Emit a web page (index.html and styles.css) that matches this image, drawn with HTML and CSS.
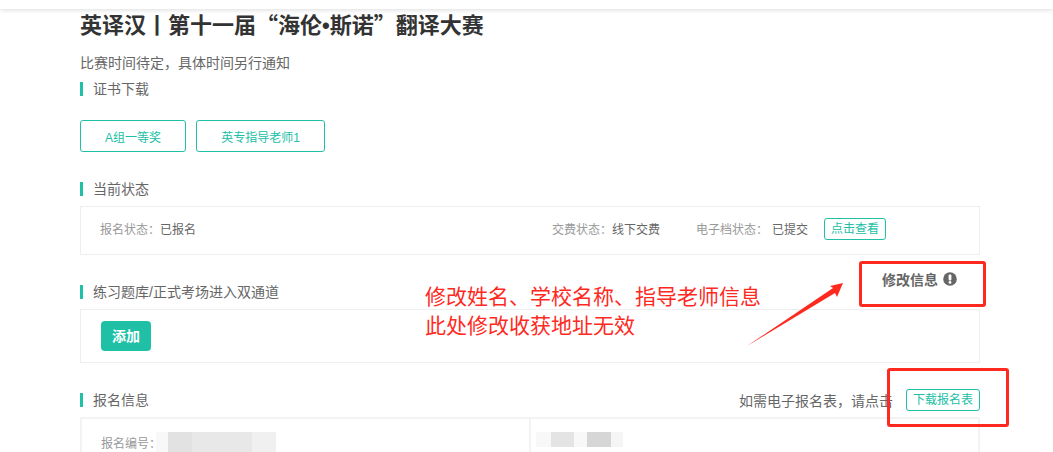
FILE: index.html
```html
<!DOCTYPE html>
<html lang="zh">
<head>
<meta charset="utf-8">
<title>第十一届“海伦•斯诺”翻译大赛</title>
<link rel="stylesheet" href="styles.css">
</head>
<body>
<header class="topbar"></header>
<main class="page">
  <h1 class="title">英译汉丨第十一届“海伦<span class="title-dot">•</span>斯诺”翻译大赛</h1>
  <p class="note">比赛时间待定，具体时间另行通知</p>

  <h2 class="heading heading-cert">证书下载</h2>
  <div class="certs">
    <a class="cert cert-a">A组一等奖</a>
    <a class="cert cert-b">英专指导老师1</a>
  </div>

  <h2 class="heading heading-status">当前状态</h2>
  <section class="box status">
    <div class="pair"><span class="label">报名状态：</span><span class="value">已报名</span></div>
    <div class="status-right">
      <div class="pair"><span class="label">交费状态：</span><span class="value">线下交费</span></div>
      <div class="pair pair-doc"><span class="label">电子档状态：</span><span class="value value-doc">已提交</span></div>
      <a class="tag tag-view">点击查看</a>
    </div>
  </section>

  <div class="heading-row heading-row-practice">
    <h2 class="heading">练习题库/正式考场进入双通道</h2>
    <div class="edit">修改信息
      <svg class="edit-icon" width="14" height="14" viewBox="0 0 14 14"><circle cx="7" cy="7" r="6.8" fill="#666"/><rect x="5.6" y="2.6" width="2.8" height="5.8" rx="1" fill="#fff"/><circle cx="7" cy="10.4" r="1.4" fill="#fff"/></svg>
    </div>
  </div>
  <section class="box practice"><a class="add">添加</a></section>

  <div class="heading-row heading-row-info">
    <h2 class="heading">报名信息</h2>
    <div class="download"><span>如需电子报名表，请点击</span><a class="tag tag-download">下载报名表</a></div>
  </div>
  <section class="info">
    <div class="info-cell info-left">
      <span class="label">报名编号：</span>
      <span class="blur blur-a"><i></i><i></i><i></i><i></i></span>
    </div>
    <div class="info-cell info-right">
      <span class="blur blur-b"><i></i><i></i><i></i><i></i><i></i></span>
    </div>
  </section>
</main>

<div class="mark mark-edit"></div>
<div class="mark mark-download"></div>
<p class="annotation">修改姓名、学校名称、指导老师信息<br>此处修改收获地址无效</p>
<svg class="arrow" width="100" height="70" viewBox="0 0 100 70"><path d="M0 66 L86 8 L83 6 L96 3 L90 17 L88 13 Z" fill="#ff2a1f"/></svg>
</body>
</html>
```
FILE: styles.css
```css
* { box-sizing: border-box; }
html, body { margin: 0; height: 452px; overflow: hidden; background: #fff; }
body { font-family: "Liberation Sans", "Noto Sans CJK SC", sans-serif; font-size: 12px; color: #666; position: relative; }

.topbar { height: 9px; background: #fff; box-shadow: 0 1px 5px rgba(0,0,0,.14); position: relative; z-index: 1; }
.page { width: 900px; margin: 0 0 0 80px; }

.title { margin: 0; height: 28px; font-family: "Noto Sans CJK SC", sans-serif; font-size: 22px; line-height: 28px; font-weight: 700; color: #333; white-space: nowrap; }
.title-dot { font-family: "Liberation Sans", sans-serif; line-height: 1; }
.note { margin: 16px 0 0; font-size: 14px; line-height: 20px; color: #666; }

.heading { margin: 0; height: 14px; padding-left: 10px; border-left: 3px solid #20c0a6; font-size: 14px; line-height: 14px; font-weight: 400; color: #666; }
.heading-cert { margin-top: 9px; }
.heading-status { margin-top: 30px; }

.certs { display: flex; gap: 10px; margin-top: 24px; }
.cert { height: 32px; padding-top: 2px; line-height: 30px; border: 1px solid #20c0a6; border-radius: 3px; color: #20c0a6; font-size: 12px; text-align: center; }
.cert-a { width: 106px; }
.cert-b { width: 129px; }

.box { border: 1px solid #eee; background: #fff; }
.status { display: flex; justify-content: space-between; align-items: center; height: 49px; margin-top: 10px; padding: 0 93px 4px 19px; }
.status-right { display: flex; align-items: center; }
.pair-doc { margin-left: 36px; }
.label { color: #999; }
.value { color: #666; }
.value-doc { margin-left: 4px; }
.tag { display: block; border: 1px solid #20c0a6; border-radius: 3px; color: #20c0a6; text-align: center; font-size: 12px; }
.tag-view { width: 62px; height: 22px; line-height: 20px; margin-left: 16px; }

.heading-row { display: flex; justify-content: space-between; }
.heading-row-practice { margin-top: 30px; height: 14px; align-items: center; }
.edit { display: flex; align-items: center; gap: 5px; font-size: 14px; font-weight: 700; color: #666; margin-right: 23px; margin-top: -26px; }
.practice { height: 54px; margin-top: 10px; padding: 11px 20px; }
.add { display: block; width: 50px; height: 30px; line-height: 30px; border-radius: 4px; background: #20c0a6; color: #fff; font-weight: 700; font-size: 14px; text-align: center; }

.heading-row-info { margin-top: 30px; height: 14px; align-items: center; }
.download { display: flex; align-items: center; gap: 13px; font-size: 14px; color: #666; }
.tag-download { width: 74px; height: 22px; line-height: 20px; }

.info { display: flex; height: 35px; margin-top: 10px; border: 2px solid #f3f3f3; border-bottom: 0; }
.info-cell { height: 100%; padding-top: 13px; display: flex; align-items: flex-start; }
.info-left { width: 449px; padding-left: 19px; border-right: 2px solid #f3f3f3; }
.info-right { flex: 1; padding-left: 5px; }
.info-left .label { line-height: 20px; margin-top: 2px; }

.blur { display: flex; height: 20px; }
.blur i { display: block; height: 100%; }
.blur-a { margin-left: -5px; }
.blur-a i:nth-child(1) { width: 12px; background: #f8f8f8; }
.blur-a i:nth-child(2) { width: 24px; background: #e2e2e2; }
.blur-a i:nth-child(3) { width: 60px; background: #e8e8e8; }
.blur-a i:nth-child(4) { width: 24px; background: #f0f0f0; }
.blur-b { height: 15px; }
.blur-b i:nth-child(1) { width: 15px; background: #f8f8f8; }
.blur-b i:nth-child(2) { width: 23px; background: #e4e4e4; }
.blur-b i:nth-child(3) { width: 13px; background: #f8f8f8; }
.blur-b i:nth-child(4) { width: 24px; background: #d6d6d6; }
.blur-b i:nth-child(5) { width: 12px; background: #f5f5f5; }

.mark { position: absolute; border: 3px solid #fe2a1f; border-radius: 3px; }
.mark-edit { left: 859px; top: 261px; width: 127px; height: 46px; }
.mark-download { left: 887px; top: 368px; width: 122px; height: 59px; }
.annotation { position: absolute; left: 425px; top: 282px; margin: 0; font-size: 21px; line-height: 29px; color: #fe2a1f; white-space: nowrap; }
.arrow { position: absolute; left: 747px; top: 280px; }
```
